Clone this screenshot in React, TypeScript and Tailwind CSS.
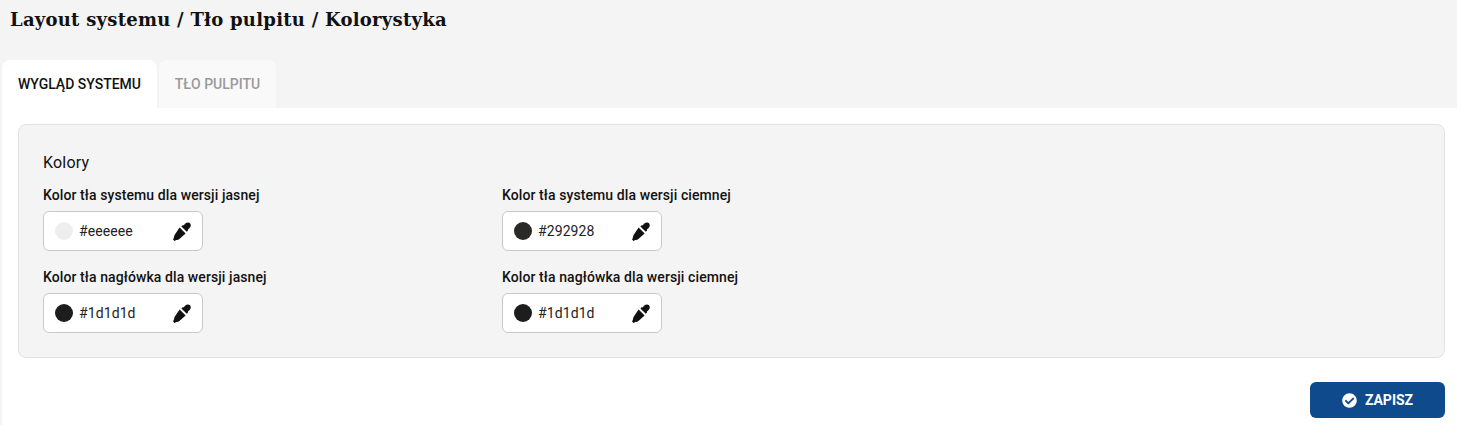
import { FaCheckCircle } from "react-icons/fa";

function Dropper() {
  return (
    <svg width="18" height="19" viewBox="0 0 18 19" className="shrink-0 text-[#111]" fill="currentColor">
      <path d="M9.6 3.2 10.8 3.2 12.3 1.6C13.6 0.2 15.8 0 17 1.2 18.2 2.4 18 4.6 16.6 5.9L15 7.4 15 8.6 13.8 9.8 8.4 4.4Z" />
      <path d="M6.6 5.4 12.6 11.4 6.4 17C5.6 17.7 4.4 17.8 3.4 18.1L1.4 18.9 0.1 17.6 0.9 15.6C1.2 14.6 1.2 13.4 1.9 12.6Z" />
    </svg>
  );
}

function ColorField({ label, value, color }: { label: string; value: string; color: string }) {
  return (
    <div className="flex flex-col">
      <div className="text-[14px] leading-[20px] font-medium tracking-[0.09px] text-[#111] h-[20px]">{label}</div>
      <div className="mt-[6px] flex items-center w-[160px] h-[40px] bg-white border border-[#c9c9c9] rounded-[6px] pl-[11px] pr-[11px]">
        <span className="w-[18px] h-[18px] rounded-full shrink-0" style={{ backgroundColor: color }} />
        <span className="ml-[6px] flex-1 text-[14px] tracking-[0.1px] text-[#222]">{value}</span>
        <Dropper />
      </div>
    </div>
  );
}

export default function App() {
  return (
    <div className="w-[1457px] h-[425px] overflow-hidden bg-[#f4f4f4] text-[#111] font-['Roboto',sans-serif]">
      <h1 className="h-[60px] pl-[10px] pt-[8px] text-[18px] leading-[24px] font-bold tracking-[0.25px] font-['DejaVu_Serif',serif]">
        Layout systemu / Tło pulpitu / Kolorystyka
      </h1>
      <div className="flex pl-[2px] gap-[2px] h-[48px]">
        <div className="w-[155px] bg-white rounded-t-[8px] flex items-center justify-center text-[14px] font-medium text-[#111]">
          WYGLĄD SYSTEMU
        </div>
        <div className="w-[117px] bg-[#f9f9f9] rounded-t-[8px] flex items-center justify-center text-[14px] font-medium text-[#999]">
          TŁO PULPITU
        </div>
      </div>
      <div className="ml-[2px] h-[317px] bg-white pl-[16px] pr-[12px] pt-[16px]">
        <section className="h-[234px] bg-[#f4f4f4] border border-[#e2e2e2] rounded-[8px] pl-[24px] pt-[27px]">
          <div className="text-[16px] leading-[22px] tracking-[0.2px] text-[#111]">Kolory</div>
          <div className="mt-[11px] grid grid-cols-[459px_300px] gap-y-[16px]">
            <ColorField label="Kolor tła systemu dla wersji jasnej" value="#eeeeee" color="#eeeeee" />
            <ColorField label="Kolor tła systemu dla wersji ciemnej" value="#292928" color="#292928" />
            <ColorField label="Kolor tła nagłówka dla wersji jasnej" value="#1d1d1d" color="#1d1d1d" />
            <ColorField label="Kolor tła nagłówka dla wersji ciemnej" value="#1d1d1d" color="#1d1d1d" />
          </div>
        </section>
        <div className="flex justify-end mt-[24px]">
          <button className="w-[135px] h-[36px] bg-[#0f4a8c] rounded-[6px] text-white text-[14px] font-bold flex items-center justify-center gap-[8px]">
            <FaCheckCircle className="w-[15px] h-[15px]" />
            ZAPISZ
          </button>
        </div>
      </div>
    </div>
  );
}
